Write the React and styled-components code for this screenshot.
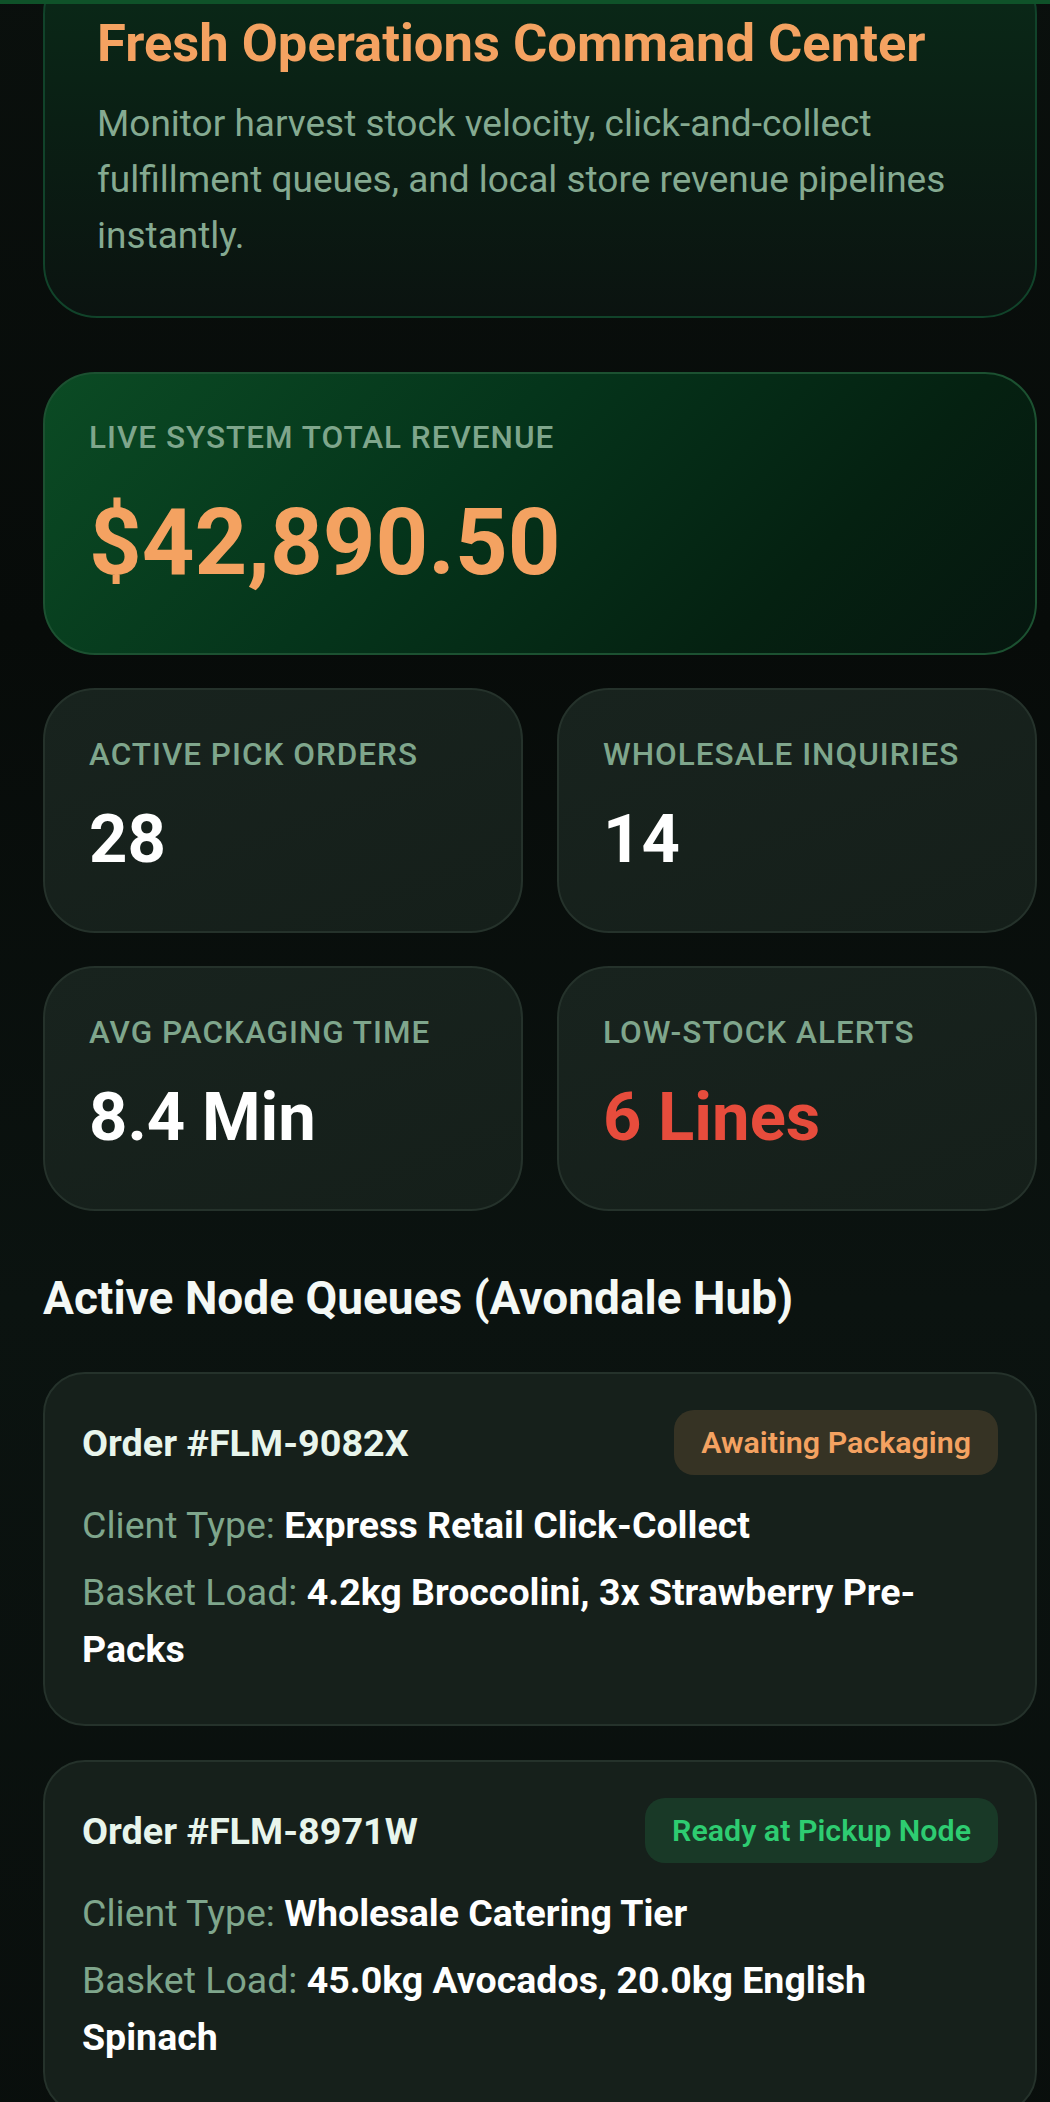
import React from "react";
import styled, { createGlobalStyle } from "styled-components";

const GlobalStyle = createGlobalStyle`
  html, body {
    margin: 0;
    padding: 0;
    background: #090e0c;
  }
  body {
    font-family: Roboto, "Noto Sans", "Liberation Sans", sans-serif;
    color: #ffffff;
  }
  * {
    box-sizing: border-box;
  }
`;

const orders = [
  {
    id: "FLM-9082X",
    status: "Awaiting Packaging",
    tone: "warn",
    client: "Express Retail Click-Collect",
    basket: "4.2kg Broccolini, 3x Strawberry Pre-Packs",
  },
  {
    id: "FLM-8971W",
    status: "Ready at Pickup Node",
    tone: "ok",
    client: "Wholesale Catering Tier",
    basket: "45.0kg Avocados, 20.0kg English Spinach",
  },
];

const metrics = [
  { label: "Active Pick Orders", value: "28" },
  { label: "Wholesale Inquiries", value: "14" },
  { label: "Avg Packaging Time", value: "8.4 Min" },
  { label: "Low-Stock Alerts", value: "6 Lines", alert: true },
];

const App = () => {
  return (
    <>
      <GlobalStyle />
      <TopBar />
      <Page>
        <Hero>
          <HeroTitle>Fresh Operations Command Center</HeroTitle>
          <HeroText>
            Monitor harvest stock velocity, click-and-collect fulfillment
            queues, and local store revenue pipelines instantly.
          </HeroText>
        </Hero>

        <RevenueCard>
          <StatLabel>Live System Total Revenue</StatLabel>
          <RevenueValue>$42,890.50</RevenueValue>
        </RevenueCard>

        <MetricGrid>
          {metrics.map((m) => (
            <MetricCard key={m.label}>
              <StatLabel $tight>{m.label}</StatLabel>
              <MetricValue $alert={m.alert}>{m.value}</MetricValue>
            </MetricCard>
          ))}
        </MetricGrid>

        <SectionTitle>Active Node Queues (Avondale Hub)</SectionTitle>

        <OrderList>
          {orders.map((o) => (
            <OrderCard key={o.id}>
              <OrderHead>
                <OrderId>Order #{o.id}</OrderId>
                <Badge $tone={o.tone}>{o.status}</Badge>
              </OrderHead>
              <DetailLine>
                <DetailKey>Client Type:</DetailKey>{" "}
                <DetailValue>{o.client}</DetailValue>
              </DetailLine>
              <DetailLine>
                <DetailKey>Basket Load:</DetailKey>{" "}
                <DetailValue>{o.basket}</DetailValue>
              </DetailLine>
            </OrderCard>
          ))}
        </OrderList>
      </Page>
    </>
  );
};

const TopBar = styled.div`
  position: relative;
  z-index: 2;
  height: 4px;
  background: #0f5229;
`;

const Page = styled.main`
  padding: 0 13px 80px 43px;
  background: linear-gradient(180deg, #0a100d 0%, #070b09 30%, #0b1310 60%, #090e0c 100%);
`;

const Hero = styled.section`
  margin-top: -44px;
  padding: 52px;
  border: 2px solid #11432a;
  border-radius: 54px;
  background: linear-gradient(180deg, #0a2a18 0%, #0a1f14 45%, #0b1310 100%);
`;

const HeroTitle = styled.h1`
  margin: 0;
  font-size: 52.5px;
  line-height: 58px;
  font-weight: 700;
  color: #f4a261;
`;

const HeroText = styled.p`
  margin: 24px 0 0;
  font-size: 37px;
  line-height: 56px;
  font-weight: 400;
  color: #85aa91;
`;

const RevenueCard = styled.section`
  margin-top: 54px;
  padding: 45px 44px 58px;
  border: 2px solid #1c5131;
  border-radius: 52px;
  background: linear-gradient(135deg, #0b4b24 0%, #05351b 40%, #052111 75%, #06160f 100%);
`;

const StatLabel = styled.div`
  font-size: 31.5px;
  line-height: ${(p) => (p.$tight ? "34px" : "38px")};
  font-weight: 500;
  letter-spacing: 1px;
  text-transform: uppercase;
  color: #7fa68c;
`;

const RevenueValue = styled.div`
  margin-top: 34px;
  font-size: 92px;
  line-height: 104px;
  font-weight: 700;
  color: #f4a261;
`;

const MetricGrid = styled.div`
  margin-top: 33px;
  display: grid;
  grid-template-columns: 1fr 1fr;
  gap: 33px 34px;
`;

const MetricCard = styled.div`
  height: 245px;
  padding: 48px 44px 0;
  border: 2px solid #25322b;
  border-radius: 52px;
  background: linear-gradient(160deg, #18231e 0%, #151f1a 100%);
`;

const MetricValue = styled.div`
  margin-top: 29px;
  font-size: 67px;
  line-height: 76px;
  font-weight: 700;
  color: ${(p) => (p.$alert ? "#e74c3c" : "#ffffff")};
`;

const SectionTitle = styled.h2`
  margin: 63px 0 49px;
  font-size: 46px;
  line-height: 49px;
  font-weight: 700;
  color: #f4f8f5;
`;

const OrderList = styled.div`
  display: flex;
  flex-direction: column;
  gap: 34px;
`;

const OrderCard = styled.article`
  padding: 36px 37px 46px;
  border: 2px solid #25322b;
  border-radius: 42px;
  background: #16201b;
`;

const OrderHead = styled.div`
  display: flex;
  align-items: center;
  justify-content: space-between;
  margin-bottom: 22px;
`;

const OrderId = styled.div`
  font-size: 37.8px;
  font-weight: 700;
  color: #e8f5ec;
`;

const Badge = styled.span`
  display: inline-flex;
  align-items: center;
  height: 65px;
  padding: 0 27px;
  border-radius: 20px;
  font-size: 30.4px;
  font-weight: 600;
  color: ${(p) => (p.$tone === "ok" ? "#2ecc71" : "#f4a261")};
  background: ${(p) =>
    p.$tone === "ok" ? "rgba(46, 204, 113, 0.15)" : "rgba(244, 162, 97, 0.15)"};
`;

const DetailLine = styled.p`
  margin: 10px 0 0;
  font-size: 37.5px;
  line-height: 57px;
`;

const DetailKey = styled.span`
  color: #7fa68c;
  font-weight: 400;
`;

const DetailValue = styled.strong`
  color: #ffffff;
  font-weight: 700;
`;

export default App;
